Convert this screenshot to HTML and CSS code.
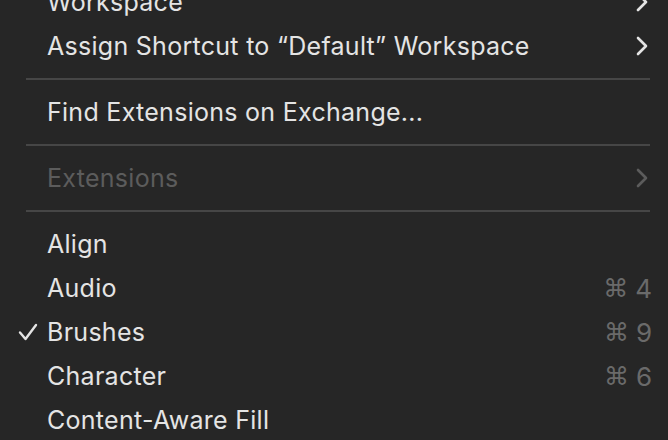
FILE: index.html
```html
<!DOCTYPE html>
<html>
<head>
<meta charset="utf-8">
<link rel="stylesheet" href="styles.css">
</head>
<body>
<div class="menu">
  <div class="item">
    <span class="check"></span>
    <span class="label">Workspace</span>
    <span class="chev"><svg viewBox="0 0 12 20" width="12" height="20"><path d="M2 2 L10 10 L2 18" fill="none" stroke="currentColor" stroke-width="2.6" stroke-linecap="round" stroke-linejoin="round"/></svg></span>
  </div>
  <div class="item">
    <span class="check"></span>
    <span class="label">Assign Shortcut to “Default” Workspace</span>
    <span class="chev"><svg viewBox="0 0 12 20" width="12" height="20"><path d="M2 2 L10 10 L2 18" fill="none" stroke="currentColor" stroke-width="2.6" stroke-linecap="round" stroke-linejoin="round"/></svg></span>
  </div>
  <div class="sep"></div>
  <div class="item">
    <span class="check"></span>
    <span class="label">Find Extensions on Exchange...</span>
  </div>
  <div class="sep"></div>
  <div class="item disabled">
    <span class="check"></span>
    <span class="label">Extensions</span>
    <span class="chev"><svg viewBox="0 0 12 20" width="12" height="20"><path d="M2 2 L10 10 L2 18" fill="none" stroke="currentColor" stroke-width="2.6" stroke-linecap="round" stroke-linejoin="round"/></svg></span>
  </div>
  <div class="sep"></div>
  <div class="item">
    <span class="check"></span>
    <span class="label">Align</span>
  </div>
  <div class="item">
    <span class="check"></span>
    <span class="label">Audio</span>
    <span class="key"><span class="cmd">⌘</span><span class="num">4</span></span>
  </div>
  <div class="item">
    <span class="check"><svg viewBox="0 0 20 18" width="20" height="18"><path d="M2 9.5 L7.5 16 L18 2" fill="none" stroke="currentColor" stroke-width="2.4" stroke-linecap="round" stroke-linejoin="round"/></svg></span>
    <span class="label">Brushes</span>
    <span class="key"><span class="cmd">⌘</span><span class="num">9</span></span>
  </div>
  <div class="item">
    <span class="check"></span>
    <span class="label">Character</span>
    <span class="key"><span class="cmd">⌘</span><span class="num">6</span></span>
  </div>
  <div class="item">
    <span class="check"></span>
    <span class="label">Content-Aware Fill</span>
  </div>
</div>
</body>
</html>
```

FILE: styles.css
```css
html, body {
  margin: 0;
  padding: 0;
  background: #262626;
}
body {
  width: 668px;
  height: 440px;
  overflow: hidden;
  font-family: Inter, "Noto Sans", sans-serif;
  color: #e4e4e4;
}
.menu {
  display: flex;
  flex-direction: column;
  margin-top: -20px;
}
.item {
  height: 44px;
  display: grid;
  grid-template-columns: 47px 1fr auto;
  align-items: center;
  padding-right: 16px;
  font-size: 25px;
  letter-spacing: 0.28px;
}
.item.disabled {
  color: #5c5c5c;
}
.check {
  display: flex;
  align-items: center;
  padding-left: 18px;
  color: #e4e4e4;
}
.label {
  white-space: nowrap;
}
.chev {
  display: flex;
  align-items: center;
  padding-right: 4px;
}
.key {
  display: flex;
  align-items: center;
  gap: 7px;
  color: #6a6a6a;
  letter-spacing: 0;
}
.cmd {
  font-family: "DejaVu Sans", sans-serif;
  font-size: 25px;
}
.num {
  font-size: 26px;
}
.sep {
  height: 22px;
  display: flex;
  align-items: center;
  padding-left: 26px;
  padding-right: 18px;
}
.sep::before {
  content: "";
  flex: 1;
  height: 2px;
  background: #464646;
}
```
